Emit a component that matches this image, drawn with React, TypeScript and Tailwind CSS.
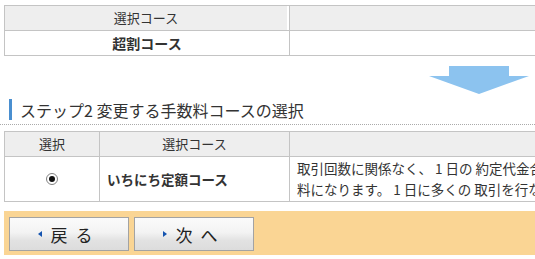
import React from "react";

const font = { fontFamily: '"Noto Sans CJK JP", "Noto Sans", sans-serif' };

function Btn({ label, flip }: { label: string; flip?: boolean }) {
  return (
    <div className="w-[120px] h-[34px] border border-[#a3a3a3] bg-[linear-gradient(#fbfbfb_0%,#f3f3f3_45%,#e2e2e2_70%,#dcdcdc_100%)] flex items-center justify-center gap-[9px] pr-[6px]">
      <span className="block w-0 h-0 border-y-[3px] border-y-transparent border-r-[4px] border-r-[#1554b0]" style={{ transform: flip ? "scaleX(-1)" : undefined }} />
      <span className="text-[17px] leading-none text-[#222] tracking-[2px]">{label}</span>
    </div>
  );
}

export default function App() {
  return (
    <div className="w-[535px] h-[259px] overflow-hidden bg-white text-[#333]" style={font}>
      <div className="pt-[5px] pl-[4px]">
        <div className="w-[800px] border border-[#c4c4c4]">
          <div className="flex h-[25px] bg-[#eeeeee] border-b border-[#c4c4c4]">
            <div className="w-[284px] border-r-2 border-r-white flex items-center justify-center text-[13px]">選択コース</div>
            <div className="flex-1 border-l border-[#c4c4c4]" />
          </div>
          <div className="flex h-[24px]">
            <div className="w-[284px] flex items-center justify-center text-[14px] font-bold">超割コース</div>
            <div className="flex-1 border-l border-[#c4c4c4]" />
          </div>
        </div>
      </div>
      <div className="flex justify-end pr-[6px] mt-[10px]">
        <svg width="100" height="28" viewBox="0 0 100 28">
          <polygon points="20,0 80,0 80,10 100,10 50,28 0,10 20,10" fill="#8cc3ef" />
        </svg>
      </div>
      <div className="mt-[5px] border-b border-dotted border-[#aaaaaa] pb-[4px]">
        <div className="flex items-center h-[21px] pl-[9px]">
          <div className="w-[3px] h-[21px] bg-[#4a8fd0]" />
          <div className="ml-[8px] text-[16px] leading-none text-[#333]">ステップ2 変更する手数料コースの選択</div>
        </div>
      </div>
      <div className="pl-[4px] mt-[6px]">
        <div className="w-[800px] border border-[#c4c4c4]">
          <div className="flex h-[25px] bg-[#eeeeee] border-b border-[#c4c4c4] text-[13px]">
            <div className="w-[94px] flex items-center justify-center">選択</div>
            <div className="w-[190px] border-l border-[#c4c4c4] flex items-center justify-center">選択コース</div>
            <div className="flex-1 border-l border-[#c4c4c4]" />
          </div>
          <div className="flex h-[44px]">
            <div className="w-[94px] flex items-center justify-center">
              <div className="w-[12px] h-[12px] rounded-full border border-[#808080] bg-white flex items-center justify-center">
                <div className="w-[6px] h-[6px] rounded-full bg-[#111]" />
              </div>
            </div>
            <div className="w-[190px] border-l border-[#c4c4c4] flex items-center pl-[7px] text-[13.5px] font-bold text-[#333]">いちにち定額コース</div>
            <div className="flex-1 border-l border-[#c4c4c4] pl-[7px] text-[13.5px] leading-[21px] whitespace-pre flex flex-col justify-center">
              <div>取引回数に関係なく、 1 日の 約定代金合計で手数</div>
              <div>料になります。 1 日に多くの 取引を行なう方におすすめです。</div>
            </div>
          </div>
        </div>
      </div>
      <div className="ml-[4px] mt-[9px] h-[44px] bg-[#fad594] flex items-start pt-[6px] pl-[5px] gap-[5px]">
        <Btn label="戻 る" />
        <Btn label="次 へ" flip />
      </div>
    </div>
  );
}
